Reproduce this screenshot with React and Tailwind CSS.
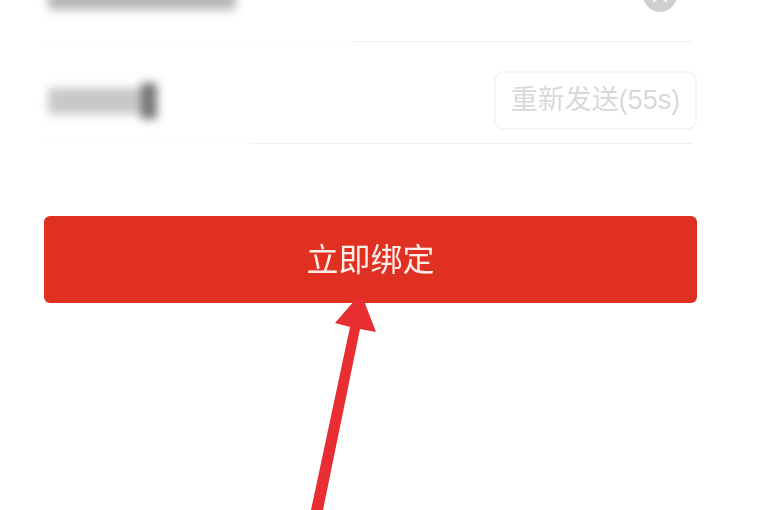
import { X } from "lucide-react";

const font = { cjk: "font-['Liberation_Sans','Noto_Sans_CJK_SC',sans-serif]" };

function Arrow() {
  return (
    <svg className="absolute left-[300px] top-[285px] blur-[0.6px]" width="90" height="225" viewBox="300 285 90 225">
      <path d="M361 293 L376 332 L360 329 L323 510 L311 510 L350 327 L335 323 Z" fill="#e92e33" />
    </svg>
  );
}

export default function App() {
  return (
    <div className={"relative h-[510px] w-[768px] overflow-hidden bg-white pl-[44px] pr-[71px] " + font.cjk}>
      {/* first field, cut off by the top of the picture */}
      <div className="flex h-[41px] items-start justify-between pl-1 pr-5">
        <div className="-mt-[10px] h-[20px] w-[188px] rounded-sm bg-[#b8b8b8] blur-[5px]" />
        <div className="-mt-[22px] flex h-[34px] w-[34px] items-center justify-center rounded-full bg-[#cfcfcf] blur-[0.6px]">
          <X className="h-6 w-6 text-[#f2f2f2]" strokeWidth={3} />
        </div>
      </div>
      <div className="flex h-[1px] w-[648px]">
        <div className="w-[310px] bg-[#fbfbfb]" />
        <div className="flex-1 bg-[#eeeeee]" />
      </div>

      {/* code field */}
      <div className="flex h-[101px] w-[653px] items-center justify-between pl-1 pt-4">
        <div className="flex h-[28px] w-[109px] items-center blur-[5px]">
          <div className="h-[26px] flex-1 bg-[#c8c8c8]" />
          <div className="h-[36px] w-[16px] bg-[#777777]" />
        </div>
        <button className="flex h-[59px] w-[203px] items-center justify-center rounded-[9px] border-2 border-[#f5f5f5] text-[27px] text-[#d8d8d8] blur-[0.5px]">
          重新发送(55s)
        </button>
      </div>
      <div className="flex h-[1px] w-[648px]">
        <div className="w-[210px] bg-[#fbfbfb]" />
        <div className="flex-1 bg-[#eeeeee]" />
      </div>

      <button className="mt-[72px] flex h-[87px] w-[653px] items-center justify-center rounded-[6px] bg-[#df3022] pt-px text-[32px] text-[#fdeeea] blur-[0.5px]">
        立即绑定
      </button>

      <Arrow />
    </div>
  );
}
